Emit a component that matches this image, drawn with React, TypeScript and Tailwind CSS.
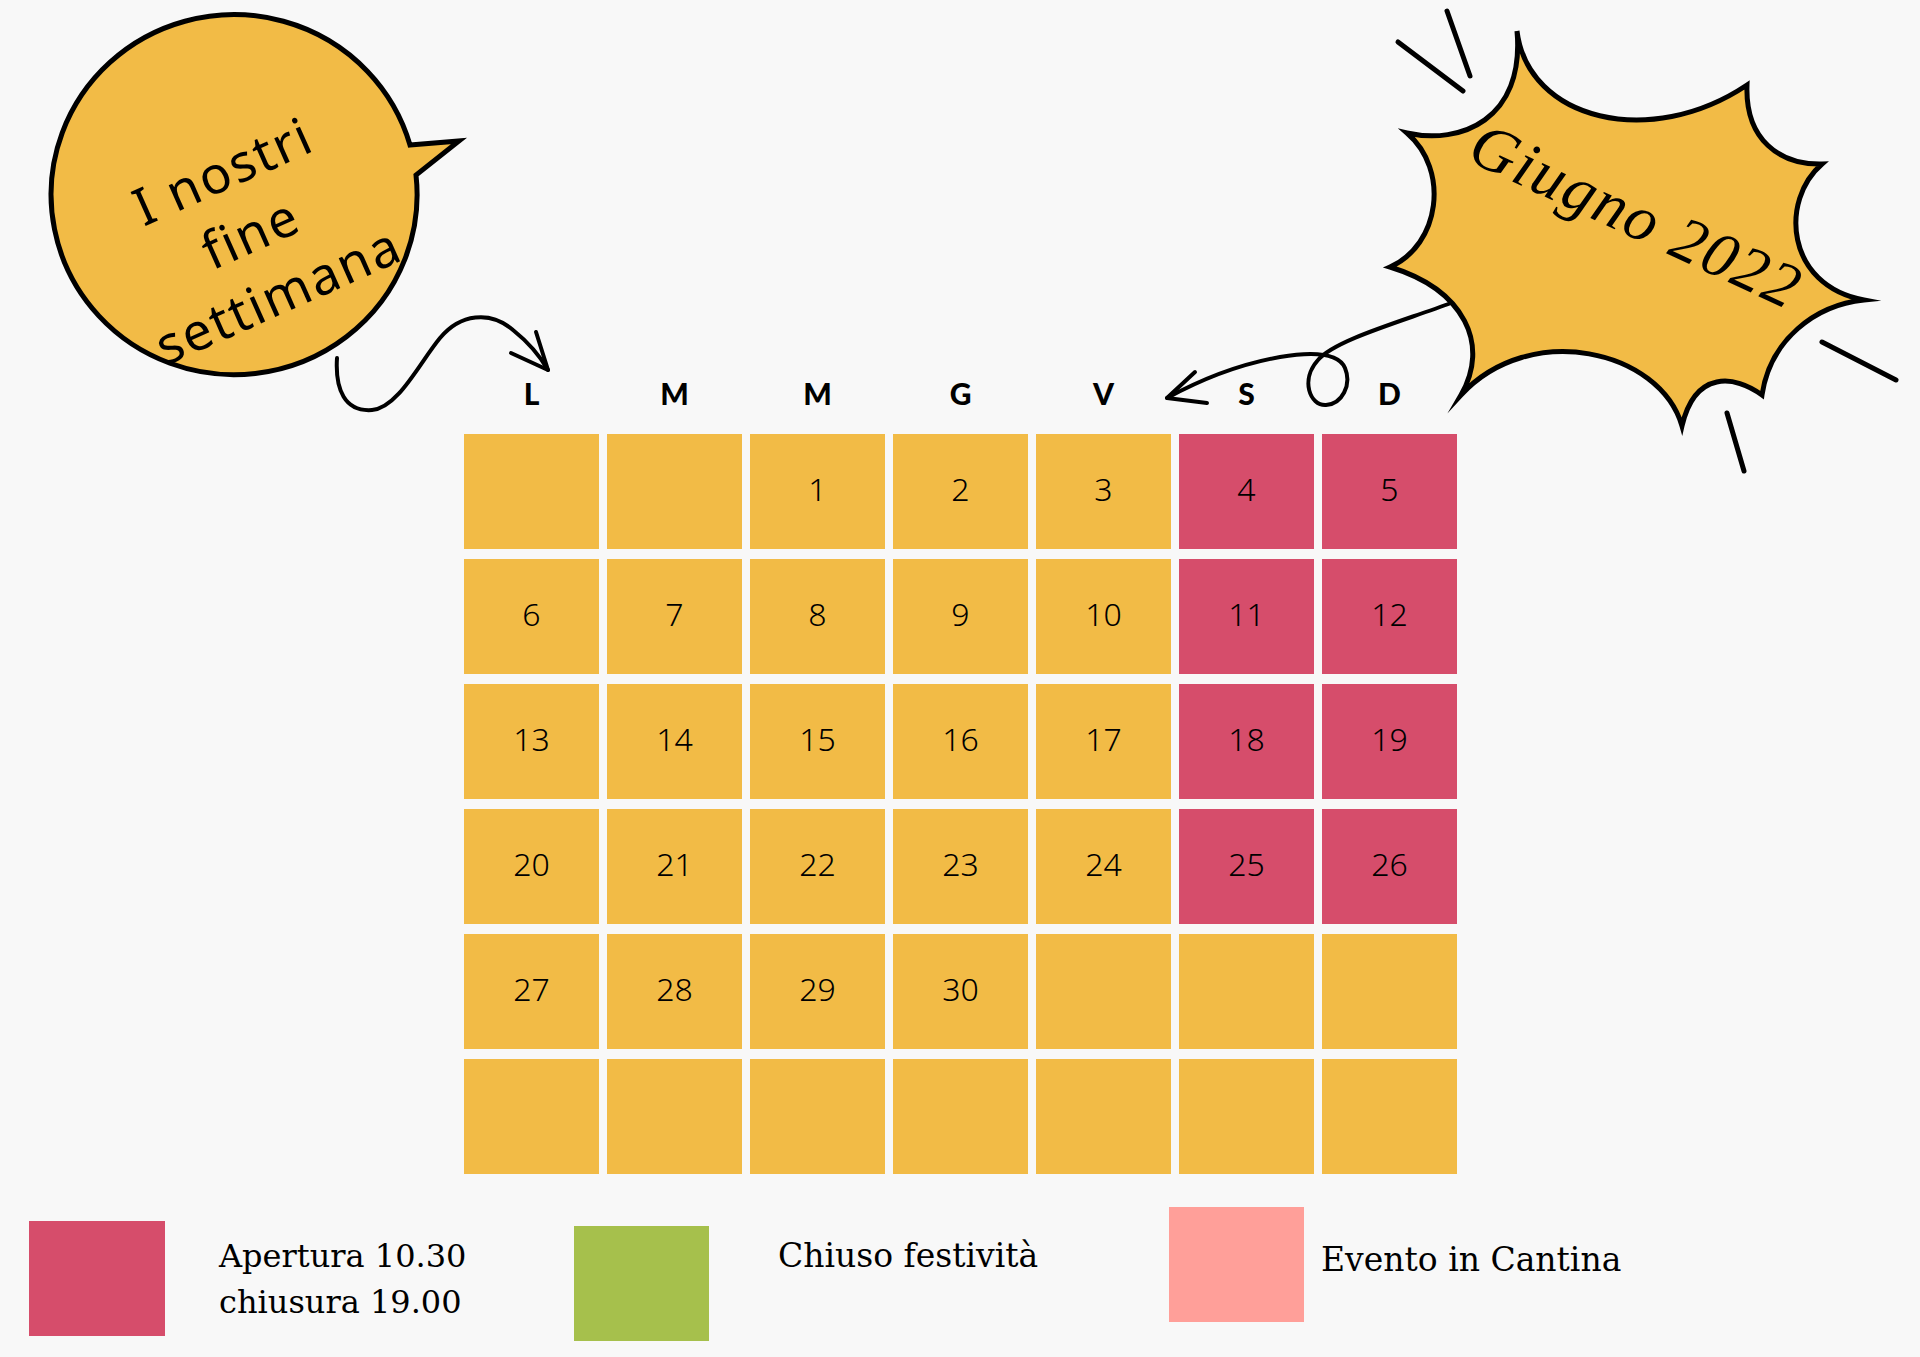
const days: (number | null)[] = [
  null, null, 1, 2, 3, 4, 5,
  6, 7, 8, 9, 10, 11, 12,
  13, 14, 15, 16, 17, 18, 19,
  20, 21, 22, 23, 24, 25, 26,
  27, 28, 29, 30, null, null, null,
  null, null, null, null, null, null, null,
];

const weekend = [4, 5, 11, 12, 18, 19, 25, 26];
const headers = ['L', 'M', 'M', 'G', 'V', 'S', 'D'];

function Doodles() {
  return (
    <svg
      className="absolute inset-0 pointer-events-none"
      width={1920}
      height={1357}
      viewBox="0 0 1920 1357"
      fill="none"
    >
      {/* speech bubble */}
      <path
        d="M 410 145 L 459 141 L 416 175 A 183 180 0 1 1 410 145 Z"
        fill="#F2BB46"
        stroke="#000"
        strokeWidth={5}
        strokeLinejoin="miter"
      />
      {/* wavy arrow to L */}
      <path
        d="M 337 358 C 335 390, 345 412, 372 410 C 398 408, 420 362, 440 338 C 460 314, 490 310, 513 330 C 528 342, 540 356, 548 370"
        stroke="#000"
        strokeWidth={4}
        strokeLinecap="round"
      />
      <path d="M 511 353 L 548 370 L 536 332" stroke="#000" strokeWidth={4} strokeLinecap="round" strokeLinejoin="round" />

      {/* starburst */}
      <path
        d="M 1517 31 C 1528 120, 1650 150, 1747 85 C 1745 140, 1780 165, 1822 164 C 1780 200, 1785 285, 1864 300 C 1815 305, 1770 340, 1762 395 C 1735 375, 1695 370, 1682 426 C 1660 350, 1530 320, 1461 395 C 1490 345, 1465 290, 1390 267 C 1440 245, 1450 170, 1407 133 C 1460 145, 1525 120, 1517 31 Z"
        fill="#F2BB46"
        stroke="#000"
        strokeWidth={5}
        strokeLinejoin="miter"
        strokeMiterlimit={12}
      />
      {/* loop arrow to V */}
      <path
        d="M 1451 303 C 1400 322, 1335 340, 1318 360 C 1300 380, 1310 406, 1326 405 C 1342 404, 1352 385, 1345 368 C 1338 352, 1310 352, 1280 357 C 1240 364, 1200 380, 1167 398"
        stroke="#000"
        strokeWidth={4}
        strokeLinecap="round"
      />
      <path d="M 1195 372 L 1167 398 L 1207 403" stroke="#000" strokeWidth={4} strokeLinecap="round" strokeLinejoin="round" />

      {/* burst strokes */}
      <g stroke="#000" strokeWidth={5} strokeLinecap="round">
        <line x1={1447} y1={11} x2={1470} y2={76} />
        <line x1={1398} y1={42} x2={1463} y2={91} />
        <line x1={1822} y1={342} x2={1896} y2={380} />
        <line x1={1727} y1={413} x2={1744} y2={471} />
      </g>
    </svg>
  );
}

export default function App() {
  return (
    <div className="relative w-[1920px] h-[1357px] overflow-hidden bg-[#f8f8f8] text-black">
      <Doodles />

      {/* bubble + burst captions */}
      <div className="absolute inset-0 pointer-events-none">
        <div className="absolute left-[250px] top-[232px] -translate-x-1/2 -translate-y-1/2 -rotate-[24deg] whitespace-nowrap text-center font-['Noto_Sans',sans-serif] text-[52px] leading-[68px] tracking-[0.04em]">
          I nostri
          <br />
          fine
          <br />
          settimana
        </div>
        <div className="absolute left-[1636px] top-[216px] -translate-x-1/2 -translate-y-1/2 rotate-[25deg] whitespace-nowrap font-['Liberation_Serif',serif] italic text-[64px] leading-none tracking-[0.03em]">
          Giugno 2022
        </div>
      </div>

      <main className="relative pl-[464px] pt-[373px]">
        <div className="grid grid-cols-[repeat(7,135px)] gap-x-[8px] h-[40px] items-center font-['Lato',sans-serif] font-black text-[30px] leading-none">
          {headers.map((h, i) => (
            <div key={i} className="text-center">
              {h}
            </div>
          ))}
        </div>

        <div className="mt-[21px] grid grid-cols-[repeat(7,135px)] auto-rows-[115px] gap-x-[8px] gap-y-[10px] font-['Noto_Sans',sans-serif] font-light text-[32px]">
          {days.map((d, i) => (
            <div
              key={i}
              className={
                d !== null && weekend.includes(d)
                  ? 'flex items-center justify-center pb-[6px] bg-[#D64D6B]'
                  : 'flex items-center justify-center pb-[6px] bg-[#F2BB46]'
              }
            >
              {d}
            </div>
          ))}
        </div>
      </main>

      <footer className="relative mt-[33px] flex items-start font-['DejaVu_Serif',serif] text-[32px] leading-[46px]">
        <div className="flex w-[574px] pl-[29px]">
          <div className="mt-[14px] w-[136px] h-[115px] bg-[#D64D6B]" />
          <div className="ml-[54px] mt-[26px]">
            Apertura 10.30
            <br />
            chiusura 19.00
          </div>
        </div>
        <div className="flex w-[595px]">
          <div className="mt-[19px] w-[135px] h-[115px] bg-[#A6C04C]" />
          <div className="ml-[69px] mt-[26px] text-[33px]">Chiuso festività</div>
        </div>
        <div className="flex">
          <div className="w-[135px] h-[115px] bg-[#FF9F99]" />
          <div className="ml-[17px] mt-[30px] text-[33px]">Evento in Cantina</div>
        </div>
      </footer>
    </div>
  );
}
